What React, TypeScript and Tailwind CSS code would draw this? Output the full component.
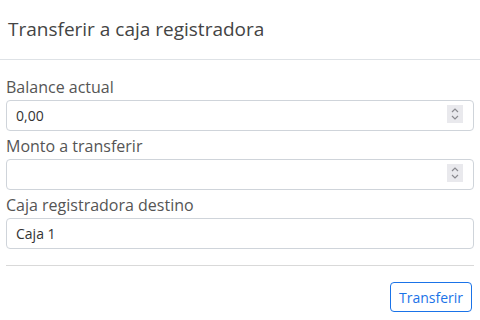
import React from 'react';

const font = { fontFamily: '"Open Sans", "Noto Sans", sans-serif' };

function Spinner() {
  return (
    <div className="absolute right-[11px] top-[5px] flex h-[18px] w-[16px] items-center justify-center bg-[#e9e9ed]">
      <svg width="10" height="14" viewBox="0 0 10 14" fill="none" stroke="#8a8a8f" strokeWidth="1.2">
        <path d="M2 5 L5 2 L8 5" />
        <path d="M2 9 L5 12 L8 9" />
      </svg>
    </div>
  );
}

function Field({ label, value, spin }: { label: string; value: string; spin?: boolean }) {
  return (
    <div className="flex flex-col">
      <label className="h-[28px] pt-[3px] text-[16px] leading-[24px] text-[#555]">{label}</label>
      <div className="relative">
        <input
          readOnly
          value={value}
          className="h-[31px] w-full rounded-[4px] border border-[#cfd4da] bg-white px-[9px] text-[14px] text-[#333] outline-none"
          style={font}
        />
        {spin && <Spinner />}
      </div>
    </div>
  );
}

export default function App() {
  return (
    <div className="h-[320px] w-[480px] bg-white" style={font}>
      <div className="flex h-[60px] items-center border-b border-[#dee2e6] px-2">
        <h5 className="text-[19px] font-normal text-[#444]">Transferir a caja registradora</h5>
      </div>
      <div className="flex flex-col px-[6px] pt-[12px]">
        <Field label="Balance actual" value="0,00" spin />
        <Field label="Monto a transferir" value="" spin />
        <Field label="Caja registradora destino" value="Caja 1" />
      </div>
      <div className="mx-[6px] mt-[16px] border-t border-[#d9d9d9]" />
      <div className="flex justify-end px-[8px] pt-[16px]">
        <button className="h-[30px] rounded-[4px] border border-[#1a73e8] px-[8px] text-[14px] text-[#1a73e8]">
          Transferir
        </button>
      </div>
    </div>
  );
}
